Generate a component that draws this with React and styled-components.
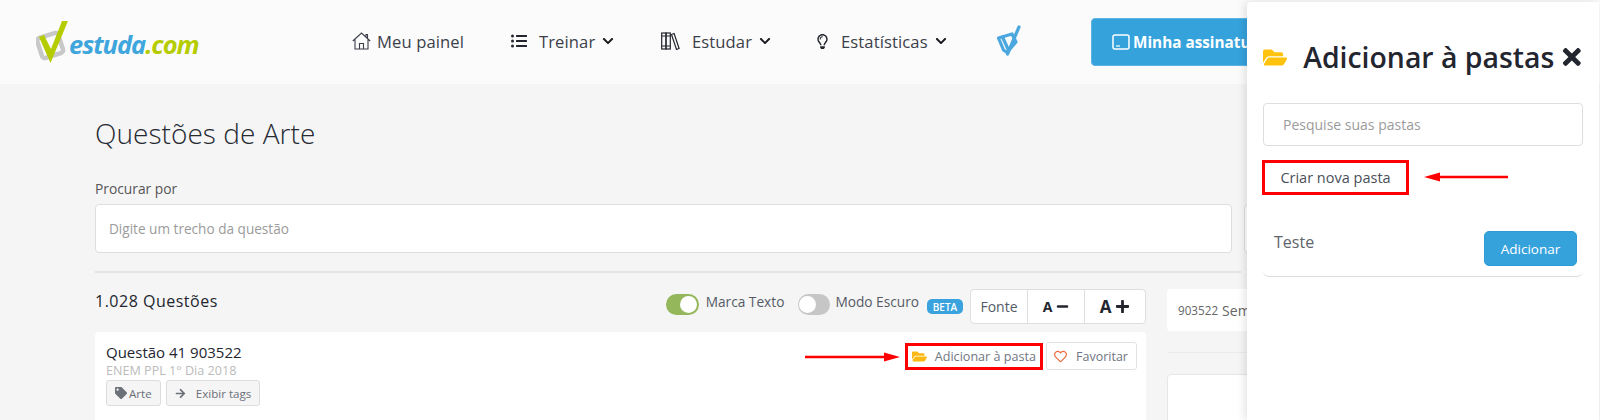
import React from 'react';
import styled, { createGlobalStyle } from 'styled-components';
import { FaFolderOpen, FaTag, FaArrowRight, FaRegHeart, FaChevronDown, FaTimes, FaMinus, FaPlus, FaListUl, FaRegLightbulb } from 'react-icons/fa';

const Global = createGlobalStyle`
  html, body { margin: 0; padding: 0; height: 420px; overflow: hidden; background: #f5f5f5; }
  * { box-sizing: border-box; }
  body { font-family: "Open Sans", "Liberation Sans", sans-serif; color: #3b3f4a; }
`;
const Page = styled.div`position: relative; width: 1600px; height: 420px; overflow: hidden;`;
const Header = styled.header`display: flex; align-items: center; height: 84px; background: #fbfbfb; padding-left: 36px;`;
const Logo = styled.div`display: flex; align-items: center; width: 316px; height: 60px; font: italic 700 25.5px/1 "Open Sans", sans-serif; letter-spacing: -1.05px;`;
const LogoBlue = styled.span`color: #3ea6dc; margin-left: -1px; margin-top: 6px;`;
const LogoLime = styled.span`color: #b5cc00; margin-top: 6px;`;
const Nav = styled.nav`display: flex; align-items: center; height: 100%; gap: 0; padding-bottom: 2px;`;
const NavItem = styled.div`display: flex; align-items: center; width: ${p => p.$w}px; font-size: 16.6px; color: #3b3f4a; letter-spacing: .1px;`;
const NavIcon = styled.span`display: inline-flex; align-items: center; width: ${p => p.$w}px; color: #23262f;`;
const Chevron = styled(FaChevronDown)`font-size: 12px; margin-left: 7px; color: #14161c;`;
const SubBtn = styled.button`display: flex; align-items: center; gap: 3px; flex: none; width: 200px; height: 48px; padding: 0 0 0 20px; margin-left: 69px; background: #35a2dc; border: 1px solid #5cb4e4; border-radius: 4px; color: #fff; font: 700 15.3px "Open Sans", sans-serif; white-space: nowrap;`;
const Main = styled.main`padding: 0 0 0 95px; width: 1700px;`;
const Title = styled.h1`margin: 30px 0 0; font-weight: 300; font-size: 28px; line-height: 38px; color: #262a33; letter-spacing: .05px;`;
const Label = styled.div`margin-top: 28px; font-size: 13.8px; line-height: 18px; color: #555;`;
const SearchRow = styled.div`display: flex; gap: 12px; margin-top: 6px;`;
const Field = styled.div`width: ${p => p.$w}px; height: 49px; display: flex; align-items: center; padding-left: 13px; background: #fff; border: 1px solid #dedede; border-radius: 4px; color: #9b9b9b; font-size: 13.6px; flex: none;`;
const Rule = styled.div`width: 1146px; margin-top: 18px; height: 2px; background: #e4e4e4;`;
const Columns = styled.div`display: grid; grid-template-columns: 1051px 400px; column-gap: 21px;`;
const ListHead = styled.div`display: flex; align-items: flex-start; height: 59px; padding-top: 16px;`;
const Count = styled.div`flex: 1; font-size: 16px; line-height: 22px; color: #23262f; letter-spacing: .5px; margin-top: 1px;`;
const Toggle = styled.span`position: relative; display: block; width: ${p => p.$on ? 33 : 32}px; height: 21px; margin-top: 5px; margin-left: ${p => p.$ml}px; border-radius: 11px; background: ${p => p.$on ? '#93b75a' : '#c6c6c6'}; flex: none;`;
const Knob = styled.span`position: absolute; top: 2px; ${p => p.$on ? 'right: 2px;' : 'left: 1px;'} width: 17px; height: 17px; background: #fff; border-radius: 50%;`;
const ToggleLabel = styled.span`margin: 3px 0 0 ${p => p.$ml}px; font-size: 13.7px; line-height: 20px; color: #555b66; white-space: nowrap;`;
const Beta = styled.span`margin: 10px 0 0 8px; height: 15px; width: 36px; display: flex; align-items: center; justify-content: center; background: #3aa3dd; color: #fff; font-size: 10px; font-weight: 600; border-radius: 5px;`;
const FontGroup = styled.div`display: flex; width: 176px; height: 35px; margin-left: 7px; background: #fff; border: 1px solid #dedede; border-radius: 4px;`;
const FontCell = styled.div`display: flex; align-items: center; justify-content: center; gap: 4px; width: ${p => p.$w}px; flex: ${p => p.$w ? 'none' : 1}; border-left: ${p => p.$first ? 'none' : '1px solid #dedede'}; font-size: ${p => p.$s}px; font-weight: ${p => p.$b ? 700 : 400}; color: ${p => p.$b ? '#23262f' : '#555b66'};`;
const Card = styled.section`background: #fff; height: 100px; padding: 11px 9px 0 11px; border-radius: 4px 4px 0 0; display: flex; justify-content: space-between;`;
const QName = styled.div`font-size: 15px; line-height: 19px; color: #23262f;`;
const QSub = styled.div`font-size: 12.6px; line-height: 18px; color: #bbb;`;
const Tags = styled.div`display: flex; gap: 5px;`;
const Tag = styled.span`display: flex; align-items: center; gap: ${p => p.$g}px; height: 26px; padding: 0 8px; background: #f5f5f5; border: 1px solid #dcdcdc; border-radius: 3px; font-size: 11.6px; color: #6b7079;`;
const Actions = styled.div`display: flex; align-items: flex-start; margin-top: -1px;`;
const ArrowSvg = styled.svg`display: block; flex: none;`;
const RedBox = styled.div`display: flex; align-items: center; height: 27px; padding: 0 4px 0 4px; border: 3px solid #f00; margin-top: 1px; margin-left: 5px; font-size: 12.6px; color: #707681; gap: 8px;`;
const Fav = styled.div`display: flex; align-items: center; gap: 9px; width: 91px; height: 28px; padding-left: 7px; margin-left: 3px; border: 1px solid #e2e2e2; border-radius: 3px; font-size: 12.5px; color: #707681;`;
const Aside = styled.aside`display: flex; flex-direction: column;`;
const SideTop = styled.div`height: 42px; margin-top: 16px; background: #fff; border-radius: 4px; display: flex; align-items: center; padding-left: 11px; font-size: 14px; color: #666;`;
const SmallNum = styled.span`font-size: 11.7px; margin-right: 4px;`;
const SideRule = styled.div`height: 1px; background: #ebebeb; margin-top: 21px;`;
const SideCard = styled.div`height: 60px; margin-top: 21px; background: #fff; border: 1px solid #e6e6e6; border-radius: 4px;`;
const Drawer = styled.div`position: absolute; left: 1247px; top: 2px; width: 352px; height: 418px; padding: 0 16px; background: #fff; border-radius: 4px 0 0 0; box-shadow: -2px 0 8px rgba(0,0,0,.12);`;
const DrawerHead = styled.div`display: flex; align-items: center; padding-top: 21px; height: 89px; color: #23262f; white-space: nowrap;`;
const DrawerTitle = styled.h2`margin: 0 7px 0 16px; font-size: 28.4px; font-weight: 600; color: #23262f; line-height: 1;`;
const DrawerSearch = styled.div`height: 43px; margin-top: 12px; display: flex; align-items: center; padding-left: 19px; border: 1px solid #dedede; border-radius: 4px; color: #9b9b9b; font-size: 14px;`;
const CreateRow = styled.div`display: flex; align-items: center; margin-top: 14px; margin-left: -1px;`;
const CreateBox = styled.div`width: 147px; height: 35px; display: flex; align-items: center; justify-content: center; border: 3px solid #f00; font-size: 14.5px; color: #4a4f5a;`;
const FolderRow = styled.div`display: flex; justify-content: space-between; align-items: flex-start; height: 47px; margin-top: 35px; padding: 0 6px 0 11px; border-bottom: 1px solid #dedede; border-radius: 0 0 6px 6px;`;
const FolderName = styled.div`font-size: 16px; line-height: 22px; color: #60646c; margin-top: 1px;`;
const AddBtn = styled.button`width: 93px; height: 35px; margin-top: 1px; background: #35a2dc; border: 1px solid #2e9bd6; border-radius: 5px; color: #fff; font: 400 13.5px "Open Sans", sans-serif;`;

const Arrow = ({ w, left, style }) => (
  <ArrowSvg width={w} height="12" viewBox={`0 0 ${w} 12`} style={style}>
    {left
      ? <path d={`M0 6 L16 1.5 L16 4.8 L${w} 4.8 L${w} 7.2 L16 7.2 L16 10.5 Z`} fill="#f00" />
      : <path d={`M${w} 6 L${w - 16} 1.5 L${w - 16} 4.8 L0 4.8 L0 7.2 L${w - 16} 7.2 L${w - 16} 10.5 Z`} fill="#f00" />}
  </ArrowSvg>
);

const LogoMark = () => (
  <svg width="34" height="44" viewBox="0 0 34 44" style={{ flex: 'none', marginTop: 0 }}>
    <rect x="3" y="15" width="22" height="21" rx="3" transform="rotate(-18 14 25)" fill="none" stroke="#c8c8c8" strokeWidth="4.5" />
    <path d="M3 17 L8 15 L15 29 L26 1 L32 1 L14.5 43 Z" fill="#b5cc00" />
  </svg>
);

const HomeIcon = () => (
  <svg width="19" height="18" viewBox="0 0 19 18" fill="none" stroke="#3b3f4a" strokeWidth="1.1">
    <path d="M.8 9 9.5 1l8.7 8M3 7.5V17h13V7.5M7.5 17v-5.5h4V17M14 5V2.5h1.5v4" />
  </svg>
);
const BooksIcon = () => (
  <svg width="19" height="18" viewBox="0 0 19 18" fill="none" stroke="#23262f" strokeWidth="1.2">
    <rect x=".7" y="1" width="4.3" height="16" /><rect x="5" y="1" width="4.3" height="16" /><path d="M.7 4h8.6M.7 14h8.6M10.5 2.5l2.6-1 5 15-2.6 1z" />
  </svg>
);
const TabletIcon = () => (
  <svg width="18" height="16" viewBox="0 0 18 16" fill="none" stroke="#fff">
    <rect x="1" y="1" width="16" height="14" rx="2" strokeWidth="1.5" /><path d="M4 12h4" strokeWidth="1.2" />
  </svg>
);
const CheckMark = () => (
  <svg width="26" height="32" viewBox="0 0 26 32" fill="none" stroke="#4ba8df" strokeWidth="3.2" strokeLinecap="round" strokeLinejoin="round">
    <path d="M23 2 11.5 29" /><path d="M2.5 13 16 9 20 17 11 27.5 7.5 25Z" /><path d="M6.5 12 12 24" />
  </svg>
);

export default function App() {
  return (
    <Page>
      <Global />
      <Header>
        <Logo><LogoMark /><LogoBlue>estuda</LogoBlue><LogoLime>.com</LogoLime></Logo>
        <Nav>
          <NavItem $w={159}><NavIcon $w={25}><HomeIcon /></NavIcon>Meu painel</NavItem>
          <NavItem $w={150}><NavIcon $w={28}><FaListUl size={16} /></NavIcon>Treinar<Chevron /></NavItem>
          <NavItem $w={154}><NavIcon $w={31}><BooksIcon /></NavIcon>Estudar<Chevron /></NavItem>
          <NavItem $w={181}><NavIcon $w={26}><FaRegLightbulb size={15} /></NavIcon>Estatísticas<Chevron /></NavItem>
          <CheckMark />
        </Nav>
        <SubBtn><TabletIcon />Minha assinatura</SubBtn>
      </Header>
      <Main>
        <Title>Questões de Arte</Title>
        <Label>Procurar por</Label>
        <SearchRow>
          <Field $w={1137}>Digite um trecho da questão</Field>
          <Field $w={300} />
        </SearchRow>
        <Rule />
        <Columns>
          <div>
            <ListHead>
              <Count>1.028 Questões</Count>
              <Toggle $on $ml={0}><Knob $on /></Toggle>
              <ToggleLabel $ml={7}>Marca Texto</ToggleLabel>
              <Toggle $ml={14}><Knob /></Toggle>
              <ToggleLabel $ml={5}>Modo Escuro</ToggleLabel>
              <Beta>BETA</Beta>
              <FontGroup>
                <FontCell $w={56} $first $s={14}>Fonte</FontCell>
                <FontCell $w={57} $s={14} $b>A<FaMinus size={13} /></FontCell>
                <FontCell $s={17} $b>A<FaPlus size={15} /></FontCell>
              </FontGroup>
            </ListHead>
            <Card>
              <div>
                <QName>Questão 41 903522</QName>
                <QSub>ENEM PPL 1° Dia 2018</QSub>
                <Tags>
                  <Tag $g={2}><FaTag size={12} />Arte</Tag>
                  <Tag $g={10}><FaArrowRight size={11} />Exibir tags</Tag>
                </Tags>
              </div>
              <Actions>
                <Arrow w={95} style={{ marginTop: 9 }} />
                <RedBox><FaFolderOpen size={15} color="#fdb913" />Adicionar à pasta</RedBox>
                <Fav><FaRegHeart size={13} color="#ef6c3e" />Favoritar</Fav>
              </Actions>
            </Card>
          </div>
          <Aside>
            <SideTop><SmallNum>903522</SmallNum>Sem</SideTop>
            <SideRule />
            <SideCard />
          </Aside>
        </Columns>
      </Main>
      <Drawer>
        <DrawerHead>
          <FaFolderOpen size={29} color="#ffc20e" />
          <DrawerTitle>Adicionar à pastas</DrawerTitle>
          <FaTimes size={26} />
        </DrawerHead>
        <DrawerSearch>Pesquise suas pastas</DrawerSearch>
        <CreateRow>
          <CreateBox>Criar nova pasta</CreateBox>
          <Arrow w={84} left style={{ marginLeft: 15, marginTop: -2 }} />
        </CreateRow>
        <FolderRow>
          <FolderName>Teste</FolderName>
          <AddBtn>Adicionar</AddBtn>
        </FolderRow>
      </Drawer>
    </Page>
  );
}
